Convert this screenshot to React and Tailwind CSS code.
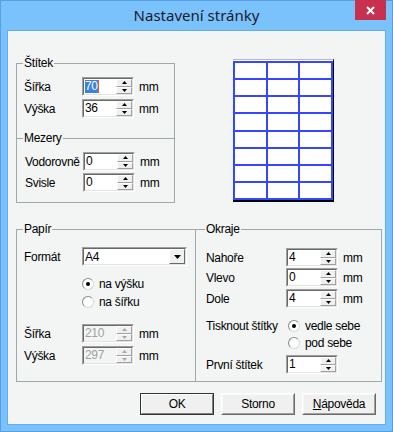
import React from 'react';

const font = "font-['Liberation_Sans',Arial,sans-serif]";

const Arrow = ({ up, disabled }) => (
  <svg width="5" height="3" viewBox="0 0 5 3" className="block">
    <path d={up ? 'M2.5 0 L5 3 L0 3 Z' : 'M0 0 L5 0 L2.5 3 Z'} fill={disabled ? '#a8a8a8' : '#000'} />
  </svg>
);

const SpinButton = ({ up, disabled }) => (
  <div className="flex-1 flex items-center justify-center bg-[#f0f0f0] border border-t-white border-l-white border-r-[#a0a0a0] border-b-[#a0a0a0]">
    <Arrow up={up} disabled={disabled} />
  </div>
);

const SpinInput = ({ value, selected, disabled }) => (
  <div className="w-[52px] h-[19px] border border-t-[#a0a0a0] border-l-[#a0a0a0] border-r-white border-b-white">
    <div
      className={`h-full flex border border-t-[#696969] border-l-[#696969] border-r-[#e3e3e3] border-b-[#e3e3e3] ${
        disabled ? 'bg-[#f2f5f4] text-[#a0a0a0]' : 'bg-white text-black'
      }`}
    >
      <div className="flex-1 flex items-center pl-[1px] leading-[13px]">
        {selected ? (
          <>
            <span className="bg-[#3b80e4] text-white">{value}</span>
            <span className="w-[1px] h-[13px] bg-[#e0602a]" />
          </>
        ) : (
          value
        )}
      </div>
      <div className="w-[16px] flex flex-col">
        <SpinButton up disabled={disabled} />
        <SpinButton disabled={disabled} />
      </div>
    </div>
  </div>
);

const Row = ({ label, labelW, children, mm, className = '' }) => (
  <div className={`flex items-center ${className}`}>
    <span className={`shrink-0 ${labelW}`}>{label}</span>
    {children}
    {mm && <span className="ml-[5px]">mm</span>}
  </div>
);

const Radio = ({ checked, label }) => (
  <div className="flex items-center h-[16px]">
    <span className="w-[12px] h-[12px] rounded-full border border-t-[#8a8a8a] border-l-[#8a8a8a] border-r-[#d8d8d8] border-b-[#d8d8d8] bg-white flex items-center justify-center">
      {checked && <span className="w-[4px] h-[4px] rounded-full bg-black" />}
    </span>
    <span className="ml-[5px]">{label}</span>
  </div>
);

const Legend = ({ children, ml = 'ml-[6px]' }) => (
  <legend className={`${ml} px-[1px] leading-[14px]`}>{children}</legend>
);

const Button = ({ children, primary }) => (
  <div className={`w-[74px] h-[22px] ${primary ? 'border border-[#333]' : 'border border-t-white border-l-white border-r-[#696969] border-b-[#696969]'}`}>
    <div className={`h-full flex items-center justify-center bg-[#f0f0f0] border ${primary ? 'border-t-white border-l-white border-r-[#808080] border-b-[#808080]' : 'border-t-[#f8f8f8] border-l-[#f8f8f8] border-r-[#a0a0a0] border-b-[#a0a0a0]'}`}>
      {children}
    </div>
  </div>
);

const Preview = () => (
  <div className="mt-[3px] ml-[58px] w-[101px] bg-white border-t border-t-[#b8b8b8] border-r border-r-black border-b-2 border-b-black pt-[1px]">
    <div className="h-[139px] grid grid-cols-3 grid-rows-8 gap-[2px] p-[2px] bg-[#3447ff]">
      {Array.from({ length: 24 }).map((_, i) => (
        <div key={i} className="bg-white" />
      ))}
    </div>
  </div>
);

export default function App() {
  return (
    <div className={`w-[393px] h-[432px] bg-[#7ac2fb] border border-[#5a9de3] flex flex-col ${font} text-[12px] tracking-[-0.3px] text-black`}>
      <div className="h-[29px] flex items-start shrink-0">
        <div className="flex-1 pt-[4px] text-center font-['Noto_Sans',sans-serif] text-[15px] leading-[20px] tracking-normal text-[#1a1a2e] pl-[37px]">
          Nastavení stránky
        </div>
        <div className="w-[31px] h-[20px] mr-[6px] -mt-px bg-[#c8304f] flex items-center justify-center">
          <svg width="9" height="9" viewBox="0 0 9 9">
            <path d="M1 1 L8 8 M8 1 L1 8" stroke="#fff" strokeWidth="2" />
          </svg>
        </div>
      </div>

      <div className="mx-[6px] h-[395px] border border-[#67abec] bg-[#f2f5f4] flex flex-col">
        <div className="flex items-start pt-[25px]">
          <fieldset className="ml-[8px] w-[159px] border border-[#9eaaa8]">
            <Legend>Štítek</Legend>
            <Row label="Šířka" labelW="w-[65px] pl-[7px]" mm className="mt-[7px]">
              <SpinInput value="70" selected />
            </Row>
            <Row label="Výška" labelW="w-[65px] pl-[7px]" mm className="mt-[3px]">
              <SpinInput value="36" />
            </Row>
            <fieldset className="mt-[13px] -mx-px -mb-px border border-[#9eaaa8] pb-[10px]">
              <Legend>Mezery</Legend>
              <Row label="Vodorovně" labelW="w-[66px] pl-[8px]" mm className="mt-[7px]">
                <SpinInput value="0" />
              </Row>
              <Row label="Svisle" labelW="w-[66px] pl-[8px]" mm className="mt-[2px]">
                <SpinInput value="0" />
              </Row>
            </fieldset>
          </fieldset>
          <Preview />
        </div>

        <div className="flex items-stretch mt-[19px]">
          <fieldset className="ml-[8px] w-[180px] border border-[#9eaaa8] pb-[16px]">
            <Legend>Papír</Legend>
            <Row label="Formát" labelW="w-[65px] pl-[7px]" className="mt-[11px]">
              <div className="w-[105px] h-[19px] border border-t-[#a0a0a0] border-l-[#a0a0a0] border-r-white border-b-white">
                <div className="h-full flex bg-white border border-t-[#696969] border-l-[#696969] border-r-[#e3e3e3] border-b-[#e3e3e3]">
                  <div className="flex-1 flex items-center pl-[1px]">A4</div>
                  <div className="w-[16px] flex items-center justify-center bg-[#f0f0f0] border border-t-white border-l-white border-r-[#696969] border-b-[#696969]">
                    <svg width="7" height="4" viewBox="0 0 7 4" className="block">
                      <path d="M0 0 L7 0 L3.5 4 Z" fill="#000" />
                    </svg>
                  </div>
                </div>
              </div>
            </Row>
            <div className="ml-[65px] mt-[10px]">
              <Radio checked label="na výšku" />
              <div className="mt-[2px]">
                <Radio label="na šířku" />
              </div>
            </div>
            <Row label="Šířka" labelW="w-[65px] pl-[7px]" mm className="mt-[14px]">
              <SpinInput value="210" disabled />
            </Row>
            <Row label="Výška" labelW="w-[65px] pl-[7px]" mm className="mt-[3px]">
              <SpinInput value="297" disabled />
            </Row>
          </fieldset>

          <fieldset className="-ml-px w-[187px] border border-[#9eaaa8]">
            <Legend ml="ml-[9px]">Okraje</Legend>
            <Row label="Nahoře" labelW="w-[90px] pl-[10px]" mm className="mt-[12px]">
              <SpinInput value="4" />
            </Row>
            <Row label="Vlevo" labelW="w-[90px] pl-[10px]" mm className="mt-[1px]">
              <SpinInput value="0" />
            </Row>
            <Row label="Dole" labelW="w-[90px] pl-[10px]" mm className="mt-[2px]">
              <SpinInput value="4" />
            </Row>
            <div className="flex items-start mt-[10px]">
              <span className="w-[92px] pl-[10px] leading-[16px]">Tisknout štítky</span>
              <div>
                <Radio checked label="vedle sebe" />
                <div className="mt-[1px]">
                  <Radio label="pod sebe" />
                </div>
              </div>
            </div>
            <Row label="První štítek" labelW="w-[90px] pl-[10px]" className="mt-[4px]">
              <SpinInput value="1" />
            </Row>
          </fieldset>
        </div>

        <div className="flex justify-end gap-[7px] pr-[9px] mt-[11px]">
          <Button primary>OK</Button>
          <Button>Storno</Button>
          <Button>
            <span>
              <span className="underline">N</span>ápověda
            </span>
          </Button>
        </div>
      </div>
    </div>
  );
}
